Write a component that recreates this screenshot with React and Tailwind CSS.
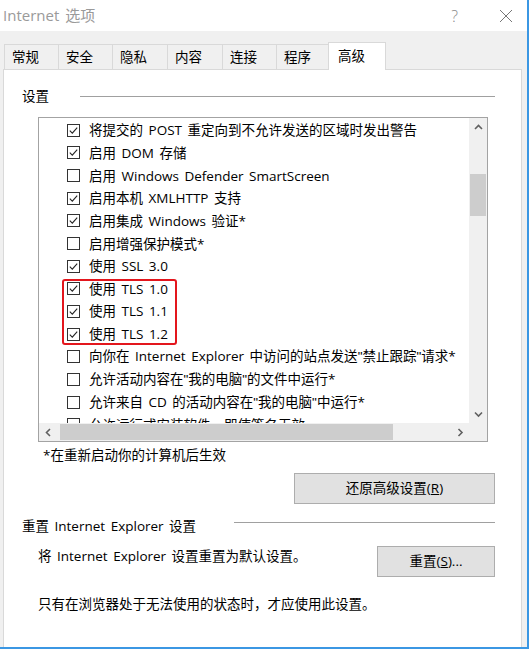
import React from "react";

const Check = ({ checked }) => (
  <svg width="13" height="13" viewBox="0 0 13 13" className="shrink-0">
    <rect x="0.5" y="0.5" width="12" height="12" fill="#fff" stroke="#333" />
    {checked && (
      <path d="M2.8 6.6 L5.3 9.1 L10.2 3.6" fill="none" stroke="#222" strokeWidth="1.1" />
    )}
  </svg>
);

const Chevron = ({ dir }) => {
  const paths = {
    up: "M1 5 L4.5 1.5 L8 5",
    down: "M1 1.5 L4.5 5 L8 1.5",
    left: "M5 1 L1.5 4.5 L5 8",
    right: "M1.5 1 L5 4.5 L1.5 8",
  };
  const vertical = dir === "up" || dir === "down";
  return (
    <svg width={vertical ? 9 : 7} height={vertical ? 7 : 9} viewBox={vertical ? "0 0 9 7" : "0 0 7 9"}>
      <path d={paths[dir]} fill="none" stroke="#606060" strokeWidth="1.6" />
    </svg>
  );
};

const Q = ({ children }) => <span className="font-['Liberation_Sans',sans-serif]">{children}</span>;

const items = [
  [true, "将提交的 POST 重定向到不允许发送的区域时发出警告"],
  [true, "启用 DOM 存储"],
  [false, "启用 Windows Defender SmartScreen"],
  [true, "启用本机 XMLHTTP 支持"],
  [true, "启用集成 Windows 验证*"],
  [false, "启用增强保护模式*"],
  [true, "使用 SSL 3.0"],
  [true, "使用 TLS 1.0"],
  [true, "使用 TLS 1.1"],
  [true, "使用 TLS 1.2"],
  [false, <>向你在 Internet Explorer 中访问的站点发送<Q>"</Q>禁止跟踪<Q>"</Q>请求*</>],
  [false, <>允许活动内容在<Q>"</Q>我的电脑<Q>"</Q>的文件中运行*</>],
  [false, <>允许来自 CD 的活动内容在<Q>"</Q>我的电脑<Q>"</Q>中运行*</>],
  [false, "允许运行或安装软件，即使签名无效"],
];

const tabs = [
  ["常规", 54],
  ["安全", 54],
  ["隐私", 55],
  ["内容", 55],
  ["连接", 54],
  ["程序", 54],
];

export default function App() {
  return (
    <div className="w-[529px] h-[649px] overflow-hidden bg-[#f0f0f0] border-r-2 border-b-2 border-[#3b97e3] flex flex-col font-['Open_Sans','Noto_Sans_CJK_SC',sans-serif] text-[13.5px] text-black [word-spacing:2px]">
      {/* Title bar */}
      <div className="h-[31px] shrink-0 bg-white flex items-center">
        <span className="pl-[3px] text-[15px] text-[#9a9a9a] leading-none">Internet 选项</span>
        <div className="flex-1" />
        <span className="text-[16px] text-[#8a8a8a] leading-none font-light mr-[41px]">?</span>
        <svg width="14" height="14" viewBox="0 0 14 14" className="mr-[14px]">
          <path d="M1 1 L13 13 M13 1 L1 13" stroke="#777" strokeWidth="1" />
        </svg>
      </div>

      {/* Tabs */}
      <div className="mt-[11px] pl-[4px] flex items-end relative z-10">
        {tabs.map(([t, w], i) => (
          <div
            key={t}
            style={{ width: w }}
            className={`h-[25px] border-t border-l border-[#d9d9d9] bg-[#f0f0f0] flex items-center pl-[7px] leading-[20px] ${i === tabs.length - 1 ? "border-r" : ""}`}
          >
            {t}
          </div>
        ))}
        <div className="h-[28px] w-[58px] -ml-[2px] -mb-px border-t border-l border-r border-[#d9d9d9] bg-white flex items-start pt-[3px] pl-[9px] leading-[20px]">
          高级
        </div>
      </div>

      {/* Panel */}
      <div className="ml-[3px] w-[519px] flex-1 border-t border-l border-r border-[#d9d9d9] bg-white flex flex-col">
        {/* Group header */}
        <div className="mt-[16px] h-[20px] flex items-center pl-[18px] pr-[26px]">
          <span className="w-[58px] shrink-0 leading-[20px]">设置</span>
          <div className="flex-1 h-px bg-[#a0a0a0]" />
        </div>

        {/* List box */}
        <div className="mt-[11px] ml-[34px] w-[450px] h-[325px] border border-[#a3a3a3] flex flex-col">
          <div className="flex flex-1 min-h-0">
            <div className="relative flex-1 overflow-hidden pt-[1px]">
              {items.map(([c, t], i) => (
                <div key={i} className="h-[22.65px] flex items-center pl-[28px] gap-[9px] whitespace-nowrap">
                  <Check checked={c} />
                  <span className="leading-[20px]">{t}</span>
                </div>
              ))}
              <div className="absolute left-[23px] top-[161px] w-[115px] h-[66px] border-2 border-[#e3161d] rounded-[3px]" />
            </div>
            {/* vertical scrollbar */}
            <div className="w-[18px] bg-[#f0f0f0] flex flex-col">
              <div className="h-[18px] flex items-center justify-center">
                <Chevron dir="up" />
              </div>
              <div className="flex-1 relative">
                <div className="mt-[38px] mx-[1px] h-[42px] bg-[#cdcdcd]" />
              </div>
              <div className="h-[18px] flex items-center justify-center">
                <Chevron dir="down" />
              </div>
            </div>
          </div>
          {/* horizontal scrollbar */}
          <div className="h-[18px] flex bg-[#f0f0f0]">
            <div className="w-[18px] flex items-center justify-center">
              <Chevron dir="left" />
            </div>
            <div className="flex-1 flex items-stretch py-[1px]">
              <div className="ml-[3px] w-[333px] bg-[#cdcdcd]" />
            </div>
            <div className="w-[18px] flex items-center justify-center">
              <Chevron dir="right" />
            </div>
            <div className="w-[18px]" />
          </div>
        </div>

        {/* Note */}
        <div className="mt-[4px] ml-[39px] leading-[18px]">*在重新启动你的计算机后生效</div>

        {/* Restore button */}
        <div className="mt-[9px] flex justify-end pr-[26px]">
          <button className="w-[201px] h-[31px] bg-[#e1e1e1] border border-[#adadad] flex items-center justify-center leading-none">
            还原高级设置(<span className="underline">R</span>)
          </button>
        </div>

        {/* Reset group header */}
        <div className="mt-[12px] h-[20px] flex items-center pl-[18px] pr-[26px]">
          <span className="w-[212px] shrink-0 leading-[20px]">重置 Internet Explorer 设置</span>
          <div className="flex-1 h-px bg-[#a0a0a0] mb-[7px]" />
        </div>

        {/* Reset row */}
        <div className="mt-[10px] flex items-start pl-[34px] pr-[26px]">
          <span className="leading-[20px] flex-1">将 Internet Explorer 设置重置为默认设置。</span>
          <button className="w-[118px] h-[31px] bg-[#e1e1e1] border border-[#adadad] flex items-center justify-center leading-none">
            重置(<span className="underline">S</span>)...
          </button>
        </div>

        <div className="mt-[17px] pl-[34px] leading-[20px]">只有在浏览器处于无法使用的状态时，才应使用此设置。</div>
      </div>
    </div>
  );
}
